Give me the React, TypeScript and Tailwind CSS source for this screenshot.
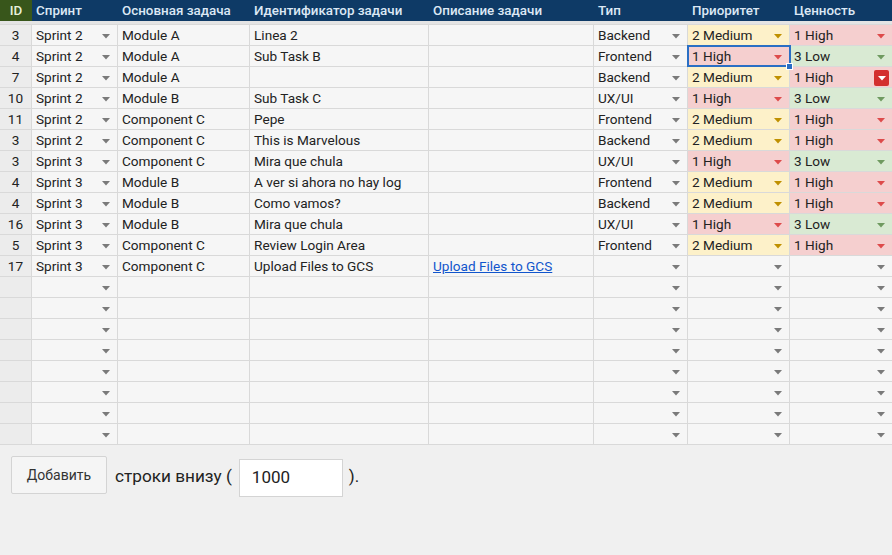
import React from 'react';

type Tone = 'none' | 'yellow' | 'red' | 'green';

const COLS = 'grid grid-cols-[32px_86px_132px_179px_165px_94px_102px_102px]';
// shared cell base; small top padding nudges text to the sheet's baseline
const CELL = 'flex items-center pt-[2px] border-[#d9d9d9]';

const headers = ['Спринт', 'Основная задача', 'Идентификатор задачи', 'Описание задачи', 'Тип', 'Приоритет', 'Ценность'];

const rows: string[][] = [
  ['3', 'Sprint 2', 'Module A', 'Linea 2', '', 'Backend', '2 Medium', '1 High'],
  ['4', 'Sprint 2', 'Module A', 'Sub Task B', '', 'Frontend', '1 High', '3 Low'],
  ['7', 'Sprint 2', 'Module A', '', '', 'Backend', '2 Medium', '1 High'],
  ['10', 'Sprint 2', 'Module B', 'Sub Task C', '', 'UX/UI', '1 High', '3 Low'],
  ['11', 'Sprint 2', 'Component C', 'Pepe', '', 'Frontend', '2 Medium', '1 High'],
  ['3', 'Sprint 2', 'Component C', 'This is Marvelous', '', 'Backend', '2 Medium', '1 High'],
  ['3', 'Sprint 3', 'Component C', 'Mira que chula', '', 'UX/UI', '1 High', '3 Low'],
  ['4', 'Sprint 3', 'Module B', 'A ver si ahora no hay log', '', 'Frontend', '2 Medium', '1 High'],
  ['4', 'Sprint 3', 'Module B', 'Como vamos?', '', 'Backend', '2 Medium', '1 High'],
  ['16', 'Sprint 3', 'Module B', 'Mira que chula', '', 'UX/UI', '1 High', '3 Low'],
  ['5', 'Sprint 3', 'Component C', 'Review Login Area', '', 'Frontend', '2 Medium', '1 High'],
  ['17', 'Sprint 3', 'Component C', 'Upload Files to GCS', 'Upload Files to GCS', '', '', ''],
];

const emptyRows = Array.from({ length: 8 }, () => ['', '', '', '', '', '', '', '']);

function toneOf(value: string): Tone {
  if (value.startsWith('2')) return 'yellow';
  if (value.startsWith('1')) return 'red';
  if (value.startsWith('3')) return 'green';
  return 'none';
}

const toneBg: Record<Tone, string> = {
  none: 'bg-[#f6f6f6]',
  yellow: 'bg-[#fdf1c9]',
  red: 'bg-[#f5cfcf]',
  green: 'bg-[#d9ead3]',
};

const arrowFill: Record<Tone, string> = {
  none: '#7a7a7a',
  yellow: '#bf9000',
  red: '#dd4b4b',
  green: '#6f9a60',
};

function Arrow({ tone }: { tone: Tone }) {
  return (
    <svg width="8" height="5" viewBox="0 0 8 5" className="shrink-0 mr-[7px]">
      <polygon points="0,0 8,0 4,4.5" fill={arrowFill[tone]} />
    </svg>
  );
}

function RedButton() {
  return (
    <span className="mr-[3px] flex h-[16px] w-[15px] shrink-0 items-center justify-center rounded-[2px] bg-[#d32f2f]">
      <svg width="8" height="5" viewBox="0 0 8 5">
        <polygon points="0,0 8,0 4,4.5" fill="#ffffff" />
      </svg>
    </span>
  );
}

function Row({ data, index }: { data: string[]; index: number }) {
  const [id, sprint, main, ident, desc, type, prio, value] = data;
  const prioTone = toneOf(prio);
  const valueTone = toneOf(value);
  const selected = index === 1;
  const redBtn = index === 2;

  return (
    <div className={`${COLS} h-[21px] border-t border-[#d9d9d9] text-[13.6px] leading-none text-[#222]`}>
      <div className={`${CELL} justify-center border-r bg-[#ececec]`}>{id}</div>
      <div className={`${CELL} justify-between border-r bg-[#f6f6f6] pl-1`}>
        <span>{sprint}</span>
        <Arrow tone="none" />
      </div>
      <div className={`${CELL} border-r bg-[#f6f6f6] pl-1`}>{main}</div>
      <div className={`${CELL} border-r bg-[#f6f6f6] pl-1 whitespace-nowrap`}>{ident}</div>
      <div className={`${CELL} border-r bg-[#f6f6f6] pl-1`}>
        {desc && <a className="text-[#1155cc] underline">{desc}</a>}
      </div>
      <div className={`${CELL} justify-between border-r bg-[#f6f6f6] pl-1`}>
        <span>{type}</span>
        <Arrow tone="none" />
      </div>
      <div
        className={`${CELL} relative justify-between border-r pl-1 ${toneBg[prioTone]} ${
          selected ? 'outline-2 -outline-offset-1 outline-[#2a6fc4]' : ''
        }`}
      >
        <span>{prio}</span>
        <Arrow tone={prioTone} />
        {selected && (
          <span className="absolute -bottom-[4px] -right-[4px] z-10 h-[7px] w-[7px] border border-white bg-[#2a6fc4]" />
        )}
      </div>
      <div className={`${CELL} justify-between pl-1 ${toneBg[valueTone]}`}>
        <span>{value}</span>
        {redBtn ? <RedButton /> : <Arrow tone={valueTone} />}
      </div>
    </div>
  );
}

export default function App() {
  return (
    <div className="h-[555px] w-[892px] overflow-hidden bg-[#f0f0f0]" style={{ fontFamily: 'Roboto, "Liberation Sans", sans-serif' }}>
      {/* Header */}
      <div className={`${COLS} h-[21px] text-[13.4px] font-medium leading-none`}>
        <div className="flex items-center justify-center bg-[#38561b] text-[#e6f0dc]">ID</div>
        {headers.map((h) => (
          <div key={h} className="flex items-center bg-[#0e3a66] pl-1 text-[#dce8f5]">
            {h}
          </div>
        ))}
      </div>
      <div className="h-[3px] bg-[#e4e4e4]" />

      {/* Rows */}
      <div className="border-b border-[#d9d9d9]">
        {[...rows, ...emptyRows].map((r, i) => (
          <Row key={i} data={r} index={i} />
        ))}
      </div>

      {/* Add rows footer */}
      <div className="flex items-start pl-[11px] pt-[11px] text-[#222]">
        <button className="h-[38px] w-[96px] rounded-[2px] border border-[#d4d4d4] bg-[#f5f5f5] text-[14px] text-[#333]">
          Добавить
        </button>
        <span className="ml-[8px] self-center text-[17.2px]">строки внизу (</span>
        <div className="ml-[7px] mt-[3px] flex h-[38px] w-[104px] items-center border border-[#d4d4d4] bg-white pl-[12px] text-[17px]">
          1000
        </div>
        <span className="ml-[6px] self-center text-[17px]">).</span>
      </div>
    </div>
  );
}
